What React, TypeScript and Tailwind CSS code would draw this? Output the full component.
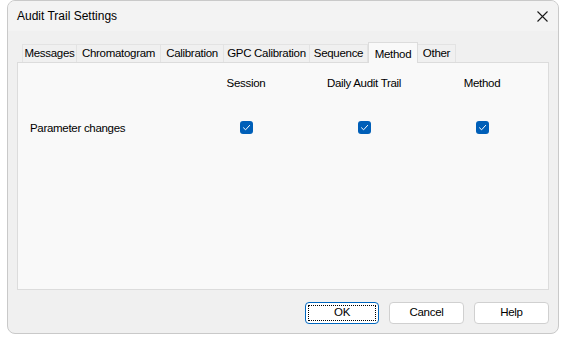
import React from "react";

const tabs: [string, string][] = [
  ["Messages", "w-[55px]"],
  ["Chromatogram", "w-[84px]"],
  ["Calibration", "w-[63px]"],
  ["GPC Calibration", "w-[86px]"],
  ["Sequence", "w-[58px]"],
  ["Method", "w-[50px]"],
  ["Other", "w-[38px]"],
];

function Check() {
  return (
    <span className="flex h-[13px] w-[13px] items-center justify-center rounded-[3px] bg-[#005fb8]">
      <svg width="9" height="9" viewBox="0 0 9 9" fill="none">
        <path d="M1.5 4.8 L3.6 6.8 L7.6 2.4" stroke="#ffffff" strokeWidth="1" strokeLinecap="round" strokeLinejoin="round" />
      </svg>
    </span>
  );
}

export default function App() {
  return (
    <div className="h-[341px] w-[567px] bg-white font-['Liberation_Sans',sans-serif] text-[11.5px] tracking-[-0.3px] text-black">
      <div className="ml-[7px] flex h-[334px] w-[552px] flex-col overflow-hidden rounded-[8px] border border-[#c9c9c9] bg-[#f0f0f0]">
        <div className="flex h-[30px] shrink-0 items-center justify-between bg-[#f3f3f3] pl-[9px] pr-[9px]">
          <span className="text-[12px] tracking-normal">Audit Trail Settings</span>
          <svg width="11" height="11" viewBox="0 0 11 11" className="mr-[1px]">
            <path d="M0.5 0.5 L10.5 10.5 M10.5 0.5 L0.5 10.5" stroke="#1a1a1a" strokeWidth="1.1" />
          </svg>
        </div>
        <div className="flex flex-1 flex-col px-[9px] pt-[11px]">
          <div className="flex h-[20px] items-end pl-[5px]">
            {tabs.map(([t, w]) =>
              t === "Method" ? (
                <div
                  key={t}
                  className={`relative z-10 -mb-[1px] flex h-[21px] shrink-0 items-start justify-center whitespace-nowrap border border-b-0 border-[#dcdcdc] bg-[#f9f9f9] pt-[3px] ${w}`}
                >
                  {t}
                </div>
              ) : (
                <div
                  key={t}
                  className={`flex h-[18px] shrink-0 items-center justify-center whitespace-nowrap border border-b-0 border-l-0 border-[#e3e3e3] bg-[#f0f0f0] pt-[1px] first:border-l ${w}`}
                >
                  {t}
                </div>
              )
            )}
          </div>
          <div className="h-[228px] border border-[#dcdcdc] bg-[#f9f9f9]">
            <div className="grid grid-cols-[169px_118px_118px_118px] items-center">
              <div className="h-[42px]" />
              <div className="text-center">Session</div>
              <div className="text-center">Daily Audit Trail</div>
              <div className="text-center">Method</div>
              <div className="h-[44px] pl-[12px] pt-[15px]">Parameter changes</div>
              <div className="flex justify-center">
                <Check />
              </div>
              <div className="flex justify-center">
                <Check />
              </div>
              <div className="flex justify-center">
                <Check />
              </div>
            </div>
          </div>
          <div className="mt-[12px] flex justify-end gap-[10px]">
            <button className="flex h-[22px] w-[74px] items-center justify-center rounded-[4px] border border-[#0067c0] bg-white p-[2px]">
              <span className="flex h-full w-full items-center justify-center border border-dotted border-black">OK</span>
            </button>
            <button className="h-[22px] w-[75px] rounded-[4px] border border-[#d0d0d0] bg-white">Cancel</button>
            <button className="h-[22px] w-[75px] rounded-[4px] border border-[#d0d0d0] bg-white">Help</button>
          </div>
        </div>
      </div>
    </div>
  );
}
